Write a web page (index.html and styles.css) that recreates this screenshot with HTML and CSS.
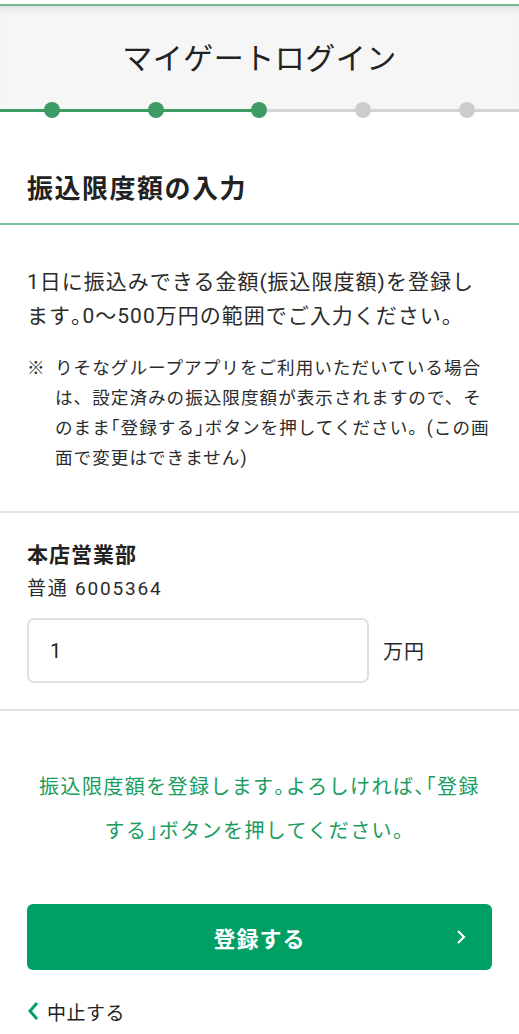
FILE: index.html
```html
<!DOCTYPE html>
<html lang="ja">
<head>
    <meta charset="UTF-8">
    <title>マイゲートログイン</title>
    <link rel="stylesheet" href="styles.css">
</head>
<body>
    <div class="header">
        <h1 class="title">マイゲートログイン</h1>
    </div>
    <ol class="steps">
        <li class="done"></li>
        <li class="done"></li>
        <li class="done current"></li>
        <li></li>
        <li></li>
    </ol>

    <h2 class="heading">振込限度額の入力</h2>

    <div class="intro">
        <p class="lead">1日に振込みできる金額(振込限度額)を登録し<br>ます<span class="br">。</span>0〜500万円の範囲でご入力ください。</p>
        <p class="note">
            <span class="mark">※</span>
            <span class="note-text">りそなグループアプリをご利用いただいている場合<br>は、設定済みの振込限度額が表示されますので、そ<br>のまま<span class="br">「</span>登録する<span class="br">」</span>ボタンを押してください。(この画<br>面で変更はできません)</span>
        </p>
    </div>

    <div class="account">
        <div class="branch">本店営業部</div>
        <div class="number">普通 6005364</div>
        <div class="amount">
            <input class="amount-input" type="text" value="1">
            <span class="unit">万円</span>
        </div>
    </div>

    <p class="confirm">振込限度額を登録します<span class="br">。</span>よろしければ<span class="br">、「</span>登録<br>する<span class="br">」</span>ボタンを押してください。</p>

    <div class="actions">
        <a href="javascript:;" class="btn-submit">
            登録する
            <svg class="arrow" width="10" height="16" viewBox="0 0 10 16"><path d="M2 2 L8 8 L2 14" fill="none" stroke="#fff" stroke-width="2.2"/></svg>
        </a>
        <a href="javascript:;" class="cancel">
            <svg width="12" height="20" viewBox="0 0 12 20"><path d="M10 2 L3 10 L10 18" fill="none" stroke="#00a064" stroke-width="3"/></svg>
            中止する
        </a>
    </div>
</body>
</html>
```

FILE: styles.css
```css
* {
    margin: 0;
    padding: 0;
    list-style: none;
    box-sizing: border-box;
}
body{
    background: #fff;
    color: #2b2b2b;
    font-family: "Roboto", "Noto Sans CJK JP", sans-serif;
}
.header{
    margin-top: 4px;
    border-top: 2px solid #72b98f;
    height: 106px;
    background: #f6f6f6;
    box-shadow: inset 0 8px 8px -6px rgba(0, 0, 0, 0.12);
    display: flex;
    align-items: center;
    justify-content: center;
    padding-bottom: 4px;
}
.title{
    font-size: 30px;
    font-weight: normal;
    color: #222;
    letter-spacing: 0.5px;
}
.steps{
    display: flex;
    height: 16px;
    margin-top: -8px;
    background: linear-gradient(to right, #3d9c63 50%, #d4d4d4 50%) center / 100% 3px no-repeat;
}
.steps li{
    flex: 1;
    display: flex;
    justify-content: center;
}
.steps li::before{
    content: "";
    width: 16px;
    height: 16px;
    border-radius: 50%;
    background: #cccccc;
}
.steps li.done::before{
    background: #3d9c63;
}
.heading{
    padding: 51px 27px 14px;
    font-size: 26px;
    line-height: 40px;
    letter-spacing: 1.5px;
    color: #222;
    border-bottom: 2px solid #7cc39a;
}
.intro{
    padding: 40px 27px 38px;
    border-bottom: 2px solid #e2e2e2;
}
.lead{
    font-size: 21px;
    line-height: 34px;
    letter-spacing: 1px;
}
.note{
    display: flex;
    margin-top: 20px;
    font-size: 17.6px;
    line-height: 30px;
    letter-spacing: 1px;
}
.mark{
    width: 28px;
    flex-shrink: 0;
}
.br{
    font-feature-settings: "halt";
}
.account{
    padding: 25px 27px 26px;
    border-bottom: 2px solid #e2e2e2;
}
.branch{
    font-size: 21px;
    font-weight: bold;
    line-height: 34px;
    letter-spacing: 1px;
    color: #222;
}
.number{
    font-size: 19px;
    line-height: 34px;
    letter-spacing: 1.8px;
}
.amount{
    display: flex;
    align-items: center;
    gap: 14px;
    margin-top: 12px;
}
.amount-input{
    width: 342px;
    height: 65px;
    border: 2px solid #e0e0e0;
    border-radius: 7px;
    padding: 0 21px;
    font-family: "Roboto", sans-serif;
    font-size: 20px;
    color: #222;
    outline: none;
}
.unit{
    font-size: 20px;
    letter-spacing: 1px;
}
.confirm{
    padding: 54px 27px 0;
    text-align: center;
    color: #1a9c5e;
    font-size: 20px;
    line-height: 44px;
    letter-spacing: 1.4px;
}
.actions{
    padding: 51px 27px 0;
}
.btn-submit{
    height: 66px;
    border-radius: 6px;
    background: #00a064;
    color: #fff;
    font-size: 22px;
    font-weight: bold;
    letter-spacing: 1px;
    text-decoration: none;
    display: flex;
    align-items: center;
    justify-content: center;
    position: relative;
}
.btn-submit .arrow{
    position: absolute;
    right: 26px;
    top: 25px;
}
.cancel{
    display: flex;
    align-items: center;
    gap: 8px;
    margin-top: 26px;
    height: 30px;
    font-size: 19px;
    color: #222;
    text-decoration: none;
    letter-spacing: 0.5px;
}
```
